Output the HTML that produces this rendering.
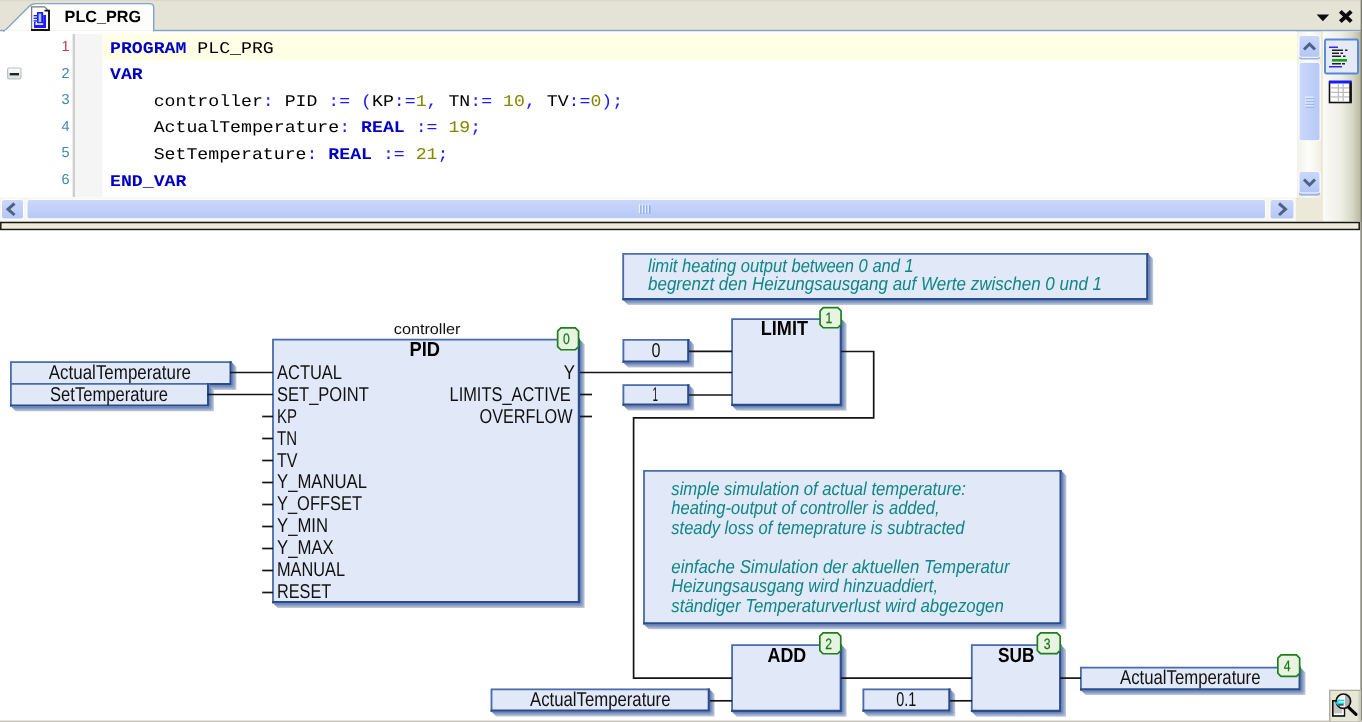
<!DOCTYPE html>
<html><head><meta charset="utf-8"><title>PLC_PRG</title>
<style>
html,body{margin:0;padding:0;background:#fff;}
body{width:1362px;height:722px;overflow:hidden;position:relative;font-family:"Liberation Sans",sans-serif;}
svg{position:absolute;left:0;top:0;display:block;text-rendering:geometricPrecision;will-change:transform;transform:translateZ(0)}
.s{font-family:"Liberation Sans",sans-serif;}
.m{font-family:"Liberation Mono",monospace;font-size:18.2px;white-space:pre;}
.kw{font-weight:bold;fill:#0000c4;}
.op{fill:#1a1aff;}
.nu{fill:#868600;}
.pin{font-family:"Liberation Sans",sans-serif;font-size:20px;fill:#111;}
.ttl{font-family:"Liberation Sans",sans-serif;font-size:20.5px;font-weight:bold;fill:#000;}
.cm{font-family:"Liberation Sans",sans-serif;font-size:18.8px;font-style:italic;fill:#108686;}
.bd{font-family:"Liberation Sans",sans-serif;font-size:15px;fill:#147a14;stroke:#147a14;stroke-width:0.25px;text-anchor:middle;}
.ln{font-family:"Liberation Sans",sans-serif;font-size:14.5px;fill:#3f86b8;text-anchor:end;}
</style></head><body>
<svg width="1362" height="722" viewBox="0 0 1362 722">
<defs>
<linearGradient id="gR" x1="0" x2="1" y1="0" y2="0"><stop offset="0" stop-color="#fbfbf7"/><stop offset="0.45" stop-color="#efefe6"/><stop offset="0.75" stop-color="#d8d8c6"/><stop offset="1" stop-color="#b4b49c"/></linearGradient>
<linearGradient id="gSB" x1="0" x2="1" y1="0" y2="0"><stop offset="0" stop-color="#f3f1e6"/><stop offset="0.5" stop-color="#fdfdfb"/><stop offset="1" stop-color="#f1efe2"/></linearGradient>
<linearGradient id="gBtn" x1="0" x2="0" y1="0" y2="1"><stop offset="0" stop-color="#cbd8fb"/><stop offset="1" stop-color="#b4c6f5"/></linearGradient>
<linearGradient id="gThV" x1="0" x2="1" y1="0" y2="0"><stop offset="0" stop-color="#cad8fb"/><stop offset="1" stop-color="#b6c8f6"/></linearGradient>
<linearGradient id="gThH" x1="0" x2="0" y1="0" y2="1"><stop offset="0" stop-color="#cad8fb"/><stop offset="1" stop-color="#b6c8f6"/></linearGradient>
<linearGradient id="gFold" x1="0" x2="0" y1="0" y2="1"><stop offset="0" stop-color="#ffffff"/><stop offset="1" stop-color="#d9dcdc"/></linearGradient>
<linearGradient id="gShR" x1="0" x2="1" y1="0" y2="0"><stop offset="0" stop-color="#5d7ab2"/><stop offset="0.15" stop-color="#617eb5"/><stop offset="1" stop-color="#c6ccda"/></linearGradient>
<linearGradient id="gShB" x1="0" x2="0" y1="0" y2="1"><stop offset="0" stop-color="#5d7ab2"/><stop offset="0.15" stop-color="#617eb5"/><stop offset="1" stop-color="#c6ccda"/></linearGradient>
</defs>

<rect x="0" y="0" width="1362" height="31" fill="#e5e3d6"/><rect x="0" y="0" width="1362" height="1.2" fill="#dbd9cd"/>
<rect x="0" y="29.8" width="1362" height="1.6" fill="#84a3c6"/>
<path d="M3 31.5 L5 30.5 L29 6.5 Q31.5 3.6 36 3.6 L149.5 3.6 Q153.7 3.6 153.7 7.5 L153.7 31 Z" fill="#fdfdfb" stroke="#84a3c6" stroke-width="1.4"/>
<rect x="5" y="30.2" width="148" height="2.2" fill="#fdfdfb"/>
<g><path d="M31.6 6.8 L44.5 6.8 L49 11.3 L49 30 L31.6 30 Z" fill="#fff"/><path d="M31.6 30.6 V6.8 H44.5 L48.5 10.8" fill="none" stroke="#7a7a7a" stroke-width="1.3"/><path d="M44.5 10.6 H49 V30 H31" fill="none" stroke="#111" stroke-width="1.9"/><rect x="37" y="12" width="6.2" height="11" fill="#1c1cff"/><rect x="38.6" y="13.6" width="2.6" height="8.6" fill="#a8d4f0"/><rect x="43.2" y="15" width="2.8" height="12" fill="#1c1cff"/><rect x="34" y="22" width="12" height="6" fill="#1c1cff"/><rect x="35.6" y="23.3" width="7.6" height="1.5" fill="#fff"/><rect x="35.6" y="22" width="1.5" height="2.8" fill="#fff"/><rect x="33.6" y="15" width="3.4" height="1.4" fill="#1c1cff"/><rect x="33.6" y="17.6" width="3.4" height="1.4" fill="#1c1cff"/><rect x="33.6" y="20.2" width="3.4" height="1.4" fill="#1c1cff"/></g>
<text x="64.6" y="21.9" class="s" font-size="16.2" font-weight="bold" fill="#000" textLength="76.6" lengthAdjust="spacingAndGlyphs">PLC_PRG</text>
<path d="M1316.6 14.6 L1329.2 14.6 L1322.9 21.2 Z" fill="#0c0c0c"/>
<path d="M1340.3 11.3 L1351.3 21.6 M1351.3 11.3 L1340.3 21.6" stroke="#0c0c0c" stroke-width="3.9" fill="none"/>
<rect x="0" y="31.6" width="1296" height="166" fill="#ffffff"/>
<rect x="102.5" y="34" width="1194.5" height="26.3" fill="#ffffe6"/>
<rect x="75" y="34" width="27.5" height="163" fill="#f5f5f5"/>
<rect x="72.6" y="34" width="2.4" height="163" fill="#cfcfcf"/>
<rect x="7.6" y="68" width="13.4" height="11" rx="1.5" fill="url(#gFold)" stroke="#b4c2c4" stroke-width="1.2"/><rect x="9.7" y="73" width="9.3" height="2.4" fill="#222"/>
<text x="110" y="0" transform="translate(0,52.5) scale(1,0.9)" class="m" xml:space="preserve"><tspan class="kw">PROGRAM</tspan> PLC_PRG</text>
<text x="69.5" y="51.0" class="ln" style="fill:#c03a3a">1</text>
<text x="110" y="0" transform="translate(0,79.1) scale(1,0.9)" class="m" xml:space="preserve"><tspan class="kw">VAR</tspan></text>
<text x="69.5" y="77.6" class="ln" style="fill:#3f86b8">2</text>
<text x="110" y="0" transform="translate(0,105.7) scale(1,0.9)" class="m" xml:space="preserve">    controller<tspan class="op">:</tspan> PID <tspan class="op">:=</tspan> <tspan class="op">(</tspan>KP<tspan class="op">:=</tspan><tspan class="nu">1</tspan><tspan class="op">,</tspan> TN<tspan class="op">:=</tspan> <tspan class="nu">10</tspan><tspan class="op">,</tspan> TV<tspan class="op">:=</tspan><tspan class="nu">0</tspan><tspan class="op">);</tspan></text>
<text x="69.5" y="104.2" class="ln" style="fill:#3f86b8">3</text>
<text x="110" y="0" transform="translate(0,132.3) scale(1,0.9)" class="m" xml:space="preserve">    ActualTemperature<tspan class="op">:</tspan> <tspan class="kw">REAL</tspan> <tspan class="op">:=</tspan> <tspan class="nu">19</tspan><tspan class="op">;</tspan></text>
<text x="69.5" y="130.8" class="ln" style="fill:#3f86b8">4</text>
<text x="110" y="0" transform="translate(0,158.9) scale(1,0.9)" class="m" xml:space="preserve">    SetTemperature<tspan class="op">:</tspan> <tspan class="kw">REAL</tspan> <tspan class="op">:=</tspan> <tspan class="nu">21</tspan><tspan class="op">;</tspan></text>
<text x="69.5" y="157.4" class="ln" style="fill:#3f86b8">5</text>
<text x="110" y="0" transform="translate(0,185.5) scale(1,0.9)" class="m" xml:space="preserve"><tspan class="kw">END_VAR</tspan></text>
<text x="69.5" y="184.0" class="ln" style="fill:#3f86b8">6</text>
<rect x="1297" y="32" width="24" height="166" fill="url(#gSB)"/>
<rect x="1299" y="36" width="21" height="23.5" rx="2.5" fill="#9fb4e8"/><rect x="1299" y="35.3" width="21" height="22" rx="2.5" fill="url(#gBtn)" stroke="#fff" stroke-width="1"/>
<path d="M1304 49.5 L1309.5 44 L1315 49.5" fill="none" stroke="#4d6185" stroke-width="3"/>
<rect x="1299" y="62.3" width="21" height="78.5" rx="2.5" fill="url(#gThV)" stroke="#fff" stroke-width="1"/>
<rect x="1305" y="96.6" width="8.6" height="1.3" fill="#eef3fe"/><rect x="1305.9" y="97.9" width="8.6" height="1.3" fill="#9db5ee"/>
<rect x="1305" y="99.5" width="8.6" height="1.3" fill="#eef3fe"/><rect x="1305.9" y="100.8" width="8.6" height="1.3" fill="#9db5ee"/>
<rect x="1305" y="102.4" width="8.6" height="1.3" fill="#eef3fe"/><rect x="1305.9" y="103.7" width="8.6" height="1.3" fill="#9db5ee"/>
<rect x="1305" y="105.3" width="8.6" height="1.3" fill="#eef3fe"/><rect x="1305.9" y="106.6" width="8.6" height="1.3" fill="#9db5ee"/>
<rect x="1299" y="173" width="21" height="22.7" rx="2.5" fill="#9fb4e8"/><rect x="1299" y="171.3" width="21" height="21.7" rx="2.5" fill="url(#gBtn)" stroke="#fff" stroke-width="1"/>
<path d="M1304 179.5 L1309.5 185 L1315 179.5" fill="none" stroke="#4d6185" stroke-width="3"/>
<rect x="1321" y="31.6" width="2" height="190" fill="#ece9d8"/><rect x="1323" y="31.6" width="39" height="190" fill="url(#gR)"/>
<rect x="1325" y="39.5" width="33" height="34" rx="1.5" fill="#e6eaf7" stroke="#5289dc" stroke-width="1.9"/>
<rect x="1329" y="46.5" width="9" height="1.5" fill="#2a2aff"/>
<rect x="1332" y="49.5" width="11" height="1.5" fill="#222"/>
<rect x="1345" y="49.5" width="2.5" height="1.5" fill="#222"/>
<rect x="1332" y="52.5" width="7" height="1.5" fill="#222"/>
<rect x="1340.5" y="52.5" width="2.5" height="1.5" fill="#222"/>
<rect x="1332" y="55.5" width="9" height="1.5" fill="#222"/>
<rect x="1343" y="55.5" width="2.5" height="1.5" fill="#222"/>
<rect x="1332" y="59" width="15" height="2.6" fill="#16a016"/>
<rect x="1332" y="63" width="9" height="1.5" fill="#222"/>
<rect x="1342" y="63" width="3" height="1.5" fill="#222"/>
<rect x="1329" y="66" width="13" height="1.5" fill="#2a2aff"/>
<rect x="1329.5" y="82" width="21.5" height="20.5" fill="#fff" stroke="#111" stroke-width="1.6"/>
<rect x="1329" y="80.5" width="22.5" height="3" fill="#1a1aff"/>
<path d="M1338.4 84 V102 M1343.2 84 V102 M1330 87.8 H1350 M1330 92.3 H1350 M1330 96.9 H1350" stroke="#bdbdbd" stroke-width="1.3" fill="none"/><rect x="1349.3" y="83" width="2.2" height="20" fill="#111"/>
<rect x="0" y="197.5" width="1296" height="24" fill="#f7f6ef"/>
<rect x="1296" y="197.5" width="25" height="24" fill="#ece9d8"/>
<rect x="1.5" y="199.5" width="22" height="19.5" rx="2.5" fill="url(#gBtn)" stroke="#fff" stroke-width="1"/>
<path d="M14.5 203.5 L8 209.2 L14.5 215" fill="none" stroke="#4d6185" stroke-width="3"/>
<rect x="27" y="199.4" width="1238.5" height="19.4" rx="2.5" fill="url(#gThH)" stroke="#fff" stroke-width="1"/>
<rect x="638.9" y="204.3" width="1.3" height="8.6" fill="#eef3fe"/><rect x="640.2" y="205.2" width="1.5" height="8.6" fill="#8eaaea"/>
<rect x="641.8" y="204.3" width="1.3" height="8.6" fill="#eef3fe"/><rect x="643.1" y="205.2" width="1.5" height="8.6" fill="#8eaaea"/>
<rect x="644.7" y="204.3" width="1.3" height="8.6" fill="#eef3fe"/><rect x="646" y="205.2" width="1.5" height="8.6" fill="#8eaaea"/>
<rect x="647.6" y="204.3" width="1.3" height="8.6" fill="#eef3fe"/><rect x="648.9" y="205.2" width="1.5" height="8.6" fill="#8eaaea"/>
<rect x="1270" y="199.5" width="24" height="19.5" rx="2.5" fill="url(#gBtn)" stroke="#fff" stroke-width="1"/>
<path d="M1279 203.5 L1285.5 209.2 L1279 215" fill="none" stroke="#4d6185" stroke-width="3"/>
<rect x="0" y="221.3" width="1362" height="9.5" fill="#ece9d8"/>
<rect x="0.8" y="222.5" width="1358.4" height="7" fill="#ecead9" stroke="#161616" stroke-width="1.5"/>
<rect x="0" y="230.6" width="1362" height="491.4" fill="#ffffff"/>
<rect x="1360.3" y="221.5" width="1.7" height="501" fill="#8e8e82"/>
<rect x="0" y="720.6" width="1362" height="1.4" fill="#c4c2b6"/>
<path d="M231.2 361.7 L236.4 366.9 L236.4 390 L231.2 384.8 Z" fill="url(#gShR)"/>
<path d="M10.5 384.8 L231.2 384.8 L236.4 390 L15.7 390 Z" fill="url(#gShB)"/>
<rect x="10" y="361.2" width="221.7" height="24.1" fill="#e1e8f7"/>
<path d="M10.9 385.3 V362.1 H231.7" fill="none" stroke="#4a6cad" stroke-width="1.8"/>
<path d="M10 384.2 H230.6 V361.2" fill="none" stroke="#2a4b8c" stroke-width="2.2"/>
<text x="48.8" y="379" class="pin" textLength="142.2" lengthAdjust="spacingAndGlyphs">ActualTemperature</text>
<path d="M208.7 383.5 L213.9 388.7 L213.9 411.3 L208.7 406.1 Z" fill="url(#gShR)"/>
<path d="M10.5 406.1 L208.7 406.1 L213.9 411.3 L15.7 411.3 Z" fill="url(#gShB)"/>
<rect x="10" y="383" width="199.2" height="23.6" fill="#e1e8f7"/>
<path d="M10.9 406.6 V383.9 H209.2" fill="none" stroke="#4a6cad" stroke-width="1.8"/>
<path d="M10 405.5 H208.1 V383" fill="none" stroke="#2a4b8c" stroke-width="2.2"/>
<text x="50" y="400.5" class="pin" textLength="118" lengthAdjust="spacingAndGlyphs">SetTemperature</text>
<path d="M579.5 339.25 L584.7 344.45 L584.7 608 L579.5 602.8 Z" fill="url(#gShR)"/>
<path d="M272.6 602.8 L579.5 602.8 L584.7 608 L277.8 608 Z" fill="url(#gShB)"/>
<rect x="272.1" y="338.75" width="307.9" height="264.55" fill="#e1e8f7"/>
<path d="M273 603.3 V339.65 H580" fill="none" stroke="#4a6cad" stroke-width="1.8"/>
<path d="M272.1 602.2 H578.9 V338.75" fill="none" stroke="#2a4b8c" stroke-width="2.2"/>
<text x="393.8" y="333.8" class="pin" style="font-size:15px" textLength="66.7" lengthAdjust="spacingAndGlyphs">controller</text>
<text x="409.5" y="356" class="ttl" textLength="30.5" lengthAdjust="spacingAndGlyphs">PID</text>
<text x="277" y="378.8" class="pin" textLength="65" lengthAdjust="spacingAndGlyphs">ACTUAL</text>
<text x="277" y="400.73" class="pin" textLength="91.8" lengthAdjust="spacingAndGlyphs">SET_POINT</text>
<text x="277" y="422.66" class="pin" textLength="20" lengthAdjust="spacingAndGlyphs">KP</text>
<text x="277" y="444.59" class="pin" textLength="20" lengthAdjust="spacingAndGlyphs">TN</text>
<text x="277" y="466.52" class="pin" textLength="20.5" lengthAdjust="spacingAndGlyphs">TV</text>
<text x="277" y="488.45" class="pin" textLength="90" lengthAdjust="spacingAndGlyphs">Y_MANUAL</text>
<text x="277" y="510.38" class="pin" textLength="85" lengthAdjust="spacingAndGlyphs">Y_OFFSET</text>
<text x="277" y="532.31" class="pin" textLength="51" lengthAdjust="spacingAndGlyphs">Y_MIN</text>
<text x="277" y="554.24" class="pin" textLength="56.8" lengthAdjust="spacingAndGlyphs">Y_MAX</text>
<text x="277" y="576.17" class="pin" textLength="68" lengthAdjust="spacingAndGlyphs">MANUAL</text>
<text x="277" y="598.1" class="pin" textLength="54.3" lengthAdjust="spacingAndGlyphs">RESET</text>
<text x="563.8" y="378.8" class="pin" textLength="11.2" lengthAdjust="spacingAndGlyphs">Y</text>
<text x="449.5" y="400.6" class="pin" textLength="121.3" lengthAdjust="spacingAndGlyphs">LIMITS_ACTIVE</text>
<text x="479.5" y="422.5" class="pin" textLength="93" lengthAdjust="spacingAndGlyphs">OVERFLOW</text>
<path d="M560.85 327.85 H575.35 L578.55 331.05 V346.55 L575.35 349.75 H560.85 L557.65 346.55 V331.05 Z" fill="#e8f3e2" stroke="#1c801c" stroke-width="1.7" stroke-linejoin="round"/>
<text x="566.5" y="344.1" class="bd" textLength="6.8" lengthAdjust="spacingAndGlyphs">0</text>
<path d="M688.9 339.5 L694.1 344.7 L694.1 367.5 L688.9 362.3 Z" fill="url(#gShR)"/>
<path d="M623 362.3 L688.9 362.3 L694.1 367.5 L628.2 367.5 Z" fill="url(#gShB)"/>
<rect x="622.5" y="339" width="66.9" height="23.8" fill="#e1e8f7"/>
<path d="M623.4 362.8 V339.9 H689.4" fill="none" stroke="#4a6cad" stroke-width="1.8"/>
<path d="M622.5 361.7 H688.3 V339" fill="none" stroke="#2a4b8c" stroke-width="2.2"/>
<text x="651.5" y="357" class="pin" textLength="9" lengthAdjust="spacingAndGlyphs">0</text>
<path d="M688.9 384.75 L694.1 389.95 L694.1 410.5 L688.9 405.3 Z" fill="url(#gShR)"/>
<path d="M623 405.3 L688.9 405.3 L694.1 410.5 L628.2 410.5 Z" fill="url(#gShB)"/>
<rect x="622.5" y="384.25" width="66.9" height="21.55" fill="#e1e8f7"/>
<path d="M623.4 405.8 V385.15 H689.4" fill="none" stroke="#4a6cad" stroke-width="1.8"/>
<path d="M622.5 404.7 H688.3 V384.25" fill="none" stroke="#2a4b8c" stroke-width="2.2"/>
<text x="652.5" y="401" class="pin" textLength="5.5" lengthAdjust="spacingAndGlyphs">1</text>
<path d="M841.4 318.8 L846.6 324 L846.6 410.7 L841.4 405.5 Z" fill="url(#gShR)"/>
<path d="M731.7 405.5 L841.4 405.5 L846.6 410.7 L736.9 410.7 Z" fill="url(#gShB)"/>
<rect x="731.2" y="318.3" width="110.7" height="87.7" fill="#e1e8f7"/>
<path d="M732.1 406 V319.2 H841.9" fill="none" stroke="#4a6cad" stroke-width="1.8"/>
<path d="M731.2 404.9 H840.8 V318.3" fill="none" stroke="#2a4b8c" stroke-width="2.2"/>
<text x="760.8" y="334.5" class="ttl" textLength="47.2" lengthAdjust="spacingAndGlyphs">LIMIT</text>
<path d="M823.25 307.65 H837.85 L841.05 310.85 V324.55 L837.85 327.75 H823.25 L820.05 324.55 V310.85 Z" fill="#e8f3e2" stroke="#1c801c" stroke-width="1.7" stroke-linejoin="round"/>
<text x="828.95" y="323" class="bd" textLength="6.8" lengthAdjust="spacingAndGlyphs">1</text>
<path d="M1147.9 253.5 L1153.1 258.7 L1153.1 304.9 L1147.9 299.7 Z" fill="url(#gShR)"/>
<path d="M622.8 299.7 L1147.9 299.7 L1153.1 304.9 L628 304.9 Z" fill="url(#gShB)"/>
<rect x="622.3" y="253" width="526.1" height="47.2" fill="#e1e8f7"/>
<path d="M623.2 300.2 V253.9 H1148.4" fill="none" stroke="#4a6cad" stroke-width="1.8"/>
<path d="M622.3 299.1 H1147.3 V253" fill="none" stroke="#2a4b8c" stroke-width="2.2"/>
<text x="648" y="272" class="cm" textLength="265.8" lengthAdjust="spacingAndGlyphs">limit heating output between 0 and 1</text>
<text x="648" y="289.7" class="cm" textLength="454" lengthAdjust="spacingAndGlyphs">begrenzt den Heizungsausgang auf Werte zwischen 0 und 1</text>
<path d="M1061.2 470.5 L1066.4 475.7 L1066.4 629.2 L1061.2 624 Z" fill="url(#gShR)"/>
<path d="M643.6 624 L1061.2 624 L1066.4 629.2 L648.8 629.2 Z" fill="url(#gShB)"/>
<rect x="643.1" y="470" width="418.6" height="154.5" fill="#e1e8f7"/>
<path d="M644 624.5 V470.9 H1061.7" fill="none" stroke="#4a6cad" stroke-width="1.8"/>
<path d="M643.1 623.4 H1060.6 V470" fill="none" stroke="#2a4b8c" stroke-width="2.2"/>
<text x="671.3" y="495" class="cm" textLength="294.7" lengthAdjust="spacingAndGlyphs">simple simulation of actual temperature:</text>
<text x="671.3" y="514.45" class="cm" textLength="268.2" lengthAdjust="spacingAndGlyphs">heating-output of controller is added,</text>
<text x="671.3" y="533.9" class="cm" textLength="293.2" lengthAdjust="spacingAndGlyphs">steady loss of temeprature is subtracted</text>
<text x="671.3" y="572.8" class="cm" textLength="338.2" lengthAdjust="spacingAndGlyphs">einfache Simulation der aktuellen Temperatur</text>
<text x="671.3" y="592.25" class="cm" textLength="266.7" lengthAdjust="spacingAndGlyphs">Heizungsausgang wird hinzuaddiert,</text>
<text x="671.3" y="611.7" class="cm" textLength="332.5" lengthAdjust="spacingAndGlyphs">ständiger Temperaturverlust wird abgezogen</text>
<path d="M709.4 689 L714.6 694.2 L714.6 716.4 L709.4 711.2 Z" fill="url(#gShR)"/>
<path d="M491.1 711.2 L709.4 711.2 L714.6 716.4 L496.3 716.4 Z" fill="url(#gShB)"/>
<rect x="490.6" y="688.5" width="219.3" height="23.2" fill="#e1e8f7"/>
<path d="M491.5 711.7 V689.4 H709.9" fill="none" stroke="#4a6cad" stroke-width="1.8"/>
<path d="M490.6 710.6 H708.8 V688.5" fill="none" stroke="#2a4b8c" stroke-width="2.2"/>
<text x="530" y="706.3" class="pin" textLength="140.5" lengthAdjust="spacingAndGlyphs">ActualTemperature</text>
<path d="M841.4 644.8 L846.6 650 L846.6 716.7 L841.4 711.5 Z" fill="url(#gShR)"/>
<path d="M731.7 711.5 L841.4 711.5 L846.6 716.7 L736.9 716.7 Z" fill="url(#gShB)"/>
<rect x="731.2" y="644.3" width="110.7" height="67.7" fill="#e1e8f7"/>
<path d="M732.1 712 V645.2 H841.9" fill="none" stroke="#4a6cad" stroke-width="1.8"/>
<path d="M731.2 710.9 H840.8 V644.3" fill="none" stroke="#2a4b8c" stroke-width="2.2"/>
<text x="767.5" y="661.8" class="ttl" textLength="38.8" lengthAdjust="spacingAndGlyphs">ADD</text>
<path d="M823.05 632.85 H837.55 L840.75 636.05 V650.55 L837.55 653.75 H823.05 L819.85 650.55 V636.05 Z" fill="#e8f3e2" stroke="#1c801c" stroke-width="1.7" stroke-linejoin="round"/>
<text x="828.7" y="648.6" class="bd" textLength="6.8" lengthAdjust="spacingAndGlyphs">2</text>
<path d="M950 689 L955.2 694.2 L955.2 716.4 L950 711.2 Z" fill="url(#gShR)"/>
<path d="M863 711.2 L950 711.2 L955.2 716.4 L868.2 716.4 Z" fill="url(#gShB)"/>
<rect x="862.5" y="688.5" width="88" height="23.2" fill="#e1e8f7"/>
<path d="M863.4 711.7 V689.4 H950.5" fill="none" stroke="#4a6cad" stroke-width="1.8"/>
<path d="M862.5 710.6 H949.4 V688.5" fill="none" stroke="#2a4b8c" stroke-width="2.2"/>
<text x="896.3" y="706.3" class="pin" textLength="20" lengthAdjust="spacingAndGlyphs">0.1</text>
<path d="M1060.8 644.8 L1066 650 L1066 716.7 L1060.8 711.5 Z" fill="url(#gShR)"/>
<path d="M971.4 711.5 L1060.8 711.5 L1066 716.7 L976.6 716.7 Z" fill="url(#gShB)"/>
<rect x="970.9" y="644.3" width="90.4" height="67.7" fill="#e1e8f7"/>
<path d="M971.8 712 V645.2 H1061.3" fill="none" stroke="#4a6cad" stroke-width="1.8"/>
<path d="M970.9 710.9 H1060.2 V644.3" fill="none" stroke="#2a4b8c" stroke-width="2.2"/>
<text x="998" y="661.8" class="ttl" textLength="36.5" lengthAdjust="spacingAndGlyphs">SUB</text>
<path d="M1040.55 632.85 H1056.95 L1060.15 636.05 V650.45 L1056.95 653.65 H1040.55 L1037.35 650.45 V636.05 Z" fill="#e8f3e2" stroke="#1c801c" stroke-width="1.7" stroke-linejoin="round"/>
<text x="1047.15" y="648.55" class="bd" textLength="6.8" lengthAdjust="spacingAndGlyphs">3</text>
<path d="M1300.25 667.3 L1305.45 672.5 L1305.45 695.1 L1300.25 689.9 Z" fill="url(#gShR)"/>
<path d="M1080.5 689.9 L1300.25 689.9 L1305.45 695.1 L1085.7 695.1 Z" fill="url(#gShB)"/>
<rect x="1080" y="666.8" width="220.75" height="23.6" fill="#e1e8f7"/>
<path d="M1080.9 690.4 V667.7 H1300.75" fill="none" stroke="#4a6cad" stroke-width="1.8"/>
<path d="M1080 689.3 H1299.65 V666.8" fill="none" stroke="#2a4b8c" stroke-width="2.2"/>
<text x="1120" y="683.8" class="pin" textLength="140.5" lengthAdjust="spacingAndGlyphs">ActualTemperature</text>
<path d="M1281.05 654.85 H1296.45 L1299.65 658.05 V673.25 L1296.45 676.45 H1281.05 L1277.85 673.25 V658.05 Z" fill="#e8f3e2" stroke="#1c801c" stroke-width="1.7" stroke-linejoin="round"/>
<text x="1287.15" y="670.95" class="bd" textLength="6.8" lengthAdjust="spacingAndGlyphs">4</text>
<path d="M230 372.5 H273" fill="none" stroke="#151515" stroke-width="1.7"/>
<path d="M207.5 394.5 H273" fill="none" stroke="#151515" stroke-width="1.7"/>
<path d="M262.2 416.5 H273" fill="none" stroke="#151515" stroke-width="1.7"/>
<path d="M262.2 438.5 H273" fill="none" stroke="#151515" stroke-width="1.7"/>
<path d="M262.2 460.5 H273" fill="none" stroke="#151515" stroke-width="1.7"/>
<path d="M262.2 482.5 H273" fill="none" stroke="#151515" stroke-width="1.7"/>
<path d="M262.2 504.5 H273" fill="none" stroke="#151515" stroke-width="1.7"/>
<path d="M262.2 526.5 H273" fill="none" stroke="#151515" stroke-width="1.7"/>
<path d="M262.2 548.5 H273" fill="none" stroke="#151515" stroke-width="1.7"/>
<path d="M262.2 570.5 H273" fill="none" stroke="#151515" stroke-width="1.7"/>
<path d="M262.2 592.5 H273" fill="none" stroke="#151515" stroke-width="1.7"/>
<path d="M580 372.5 H732" fill="none" stroke="#151515" stroke-width="1.7"/>
<path d="M580 394.5 H592" fill="none" stroke="#151515" stroke-width="1.7"/>
<path d="M580 416.5 H592" fill="none" stroke="#151515" stroke-width="1.7"/>
<path d="M689 351.3 H732" fill="none" stroke="#151515" stroke-width="1.7"/>
<path d="M689 395 H732" fill="none" stroke="#151515" stroke-width="1.7"/>
<path d="M841 351.5 H873.7 V417.8 H633.6 V678.1 H732" fill="none" stroke="#151515" stroke-width="1.7"/>
<path d="M710 700.8 H732" fill="none" stroke="#151515" stroke-width="1.7"/>
<path d="M841 678.1 H972" fill="none" stroke="#151515" stroke-width="1.7"/>
<path d="M950 700.8 H972" fill="none" stroke="#151515" stroke-width="1.7"/>
<path d="M1060 678.1 H1081" fill="none" stroke="#151515" stroke-width="1.7"/>
<rect x="1360.6" y="0" width="1.4" height="222" fill="#7d7d72"/>
<rect x="1329" y="689.8" width="31.4" height="31" fill="#e7e7d7"/>
<path d="M1329.7 721 V690.4 H1360.3" fill="none" stroke="#b0ad9b" stroke-width="1.4"/>
<rect x="1358.4" y="691" width="2" height="30" fill="#cfcfbf"/>
<g><rect x="1332.8" y="700.8" width="11.6" height="15.2" fill="#c6c6c6" stroke="#111" stroke-width="1.6"/><path d="M1334 714.3 H1343 V702" fill="none" stroke="#fff" stroke-width="1.4"/><circle cx="1343.4" cy="701.2" r="7.2" fill="#b0b0b0"/><path d="M1343.4 694 A7.2 7.2 0 0 0 1343.4 708.4 L1345 708 L1345 694.5 Z" fill="#f4f4f4"/><circle cx="1343.4" cy="701.2" r="7.2" fill="none" stroke="#111" stroke-width="1.7"/><path d="M1337 703.2 H1344.2 M1339.2 700.6 H1344.2 M1339.6 699.6 L1336.6 703 L1339.6 706" stroke="#14d8e0" stroke-width="1.5" fill="none"/><path d="M1338.4 704.9 H1343.6" stroke="#111" stroke-width="1.2"/><path d="M1348.6 707.4 L1356 714.3" stroke="#0a0a0a" stroke-width="3.2" stroke-linecap="round"/></g>
</svg></body></html>
